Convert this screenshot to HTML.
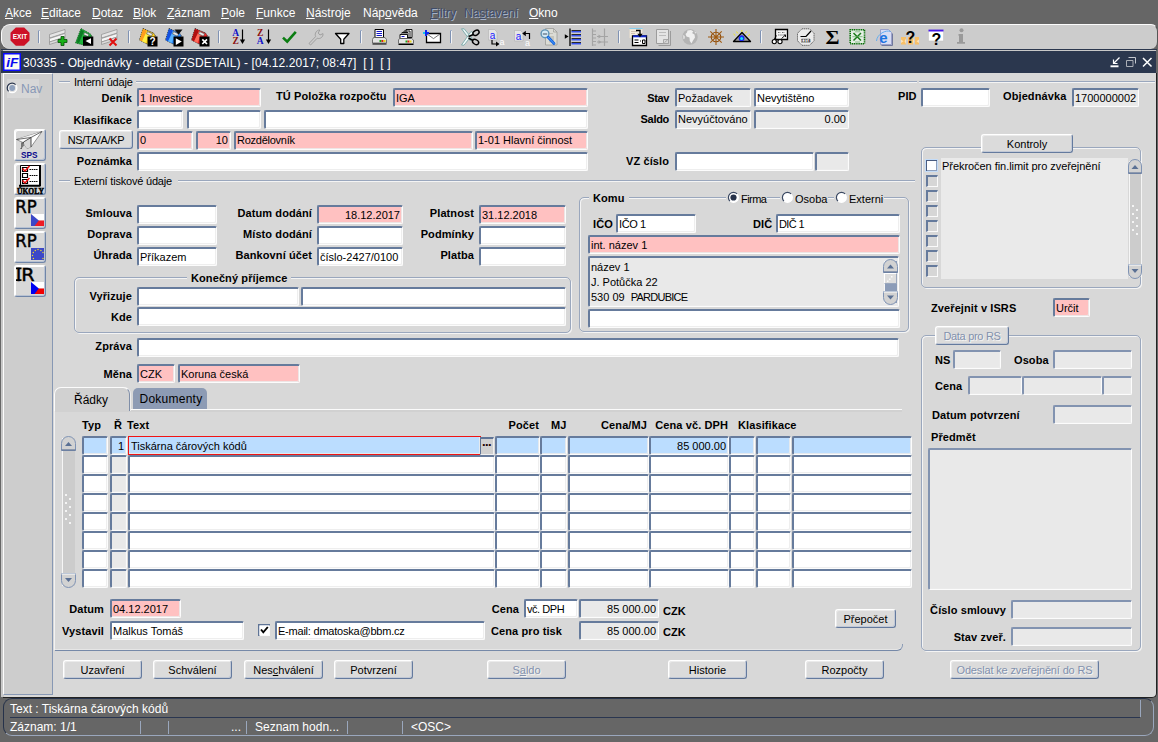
<!DOCTYPE html><html lang="cs"><head><meta charset="utf-8"><title>30335 - Objednávky - detail</title><style>
*{box-sizing:border-box;margin:0;padding:0}
html,body{width:1158px;height:742px;overflow:hidden;background:#666666;font-family:"Liberation Sans",sans-serif;font-size:11px;color:#000}
.abs,.f,.l,.b,.ln,.fr{position:absolute}
.f{height:19px;border:solid;border-width:2px 1px 1px 2px;border-color:#667b9c #fcfcfc #fcfcfc #667b9c;border-radius:2px;background:#fff;font-size:11px;line-height:17px;padding:0 2px 1px 1px;white-space:nowrap;overflow:hidden;box-shadow:inset -1px -1px 0 rgba(235,235,235,0.85)}
.p{background:#ffc1c1}
.g{background:#e9e9e9}
.d{border-color:#8293b0 #fcfcfc #fcfcfc #8293b0}
.s{background:#bbddff}
.r{text-align:right}
.l{font-weight:bold;font-size:11px;line-height:14px;white-space:nowrap;letter-spacing:0.1px}
.n{letter-spacing:-0.2px}
.lr{text-align:right}
.n{font-weight:normal}
.b{height:19px;border:1px solid;border-color:#fff #647a9e #647a9e #fff;border-radius:3px;background:#dbdbdb;font-size:11px;line-height:18px;text-align:center;white-space:nowrap;box-shadow:inset 1px 1px 0 #ebebeb,inset -1px -1px 0 #c2c9d6}
.dis{color:#8291ad;text-shadow:1px 1px 0 #f4f4f4}
.fr{border:1px solid #9aa7bd;border-radius:5px;box-shadow:1px 1px 0 #f4f4f4, inset 1px 1px 0 #f4f4f4}
.hl{height:2px;border-top:1px solid #9aa7bd;border-bottom:1px solid #f4f4f4}
.m{position:absolute;top:6px;color:#fff;font-size:12px;line-height:14px;white-space:nowrap}
.m u{text-decoration:underline}
.md{color:#3f4c68;text-shadow:1px 1px 0 #a6b1c6}
</style></head><body>
<div class="m " style="left:5px"><u>A</u>kce</div>
<div class="m " style="left:41px"><u>E</u>ditace</div>
<div class="m " style="left:92px"><u>D</u>otaz</div>
<div class="m " style="left:133px"><u>B</u>lok</div>
<div class="m " style="left:167px"><u>Z</u>áznam</div>
<div class="m " style="left:221px"><u>P</u>ole</div>
<div class="m " style="left:256px"><u>F</u>unkce</div>
<div class="m " style="left:306px"><u>N</u>ástroje</div>
<div class="m " style="left:363px">Náp<u>o</u>věda</div>
<div class="m md" style="left:430px"><u>F</u>iltry</div>
<div class="m md" style="left:464px">Na<u>s</u>tavení</div>
<div class="m " style="left:529px"><u>O</u>kno</div>
<div class="abs" style="left:1px;top:49px;width:1156px;height:1px;background:#2b374e"></div><div class="abs" style="left:3px;top:50px;width:1153px;height:1px;background:#c8c8c8"></div>
<div class="abs" style="left:1px;top:24px;width:1157px;height:25px;background:#cccccc;border-radius:9px 7px 7px 9px;border-top:1px solid #fcfcfc;border-left:1px solid #fcfcfc;border-right:1px solid #555"></div>
<svg class="abs" style="left:0;top:24px" width="1158" height="28" viewBox="0 24 1158 28"><path d="M15.8 27.5h8.4l5.3 5.3v7.6l-5.3 5.3h-8.4l-5.3-5.3v-7.6z" fill="#cd1126"/><text x="20" y="39.3" font-size="7" font-weight="bold" fill="#fff" text-anchor="middle" font-family="Liberation Sans,sans-serif" textLength="14.5" lengthAdjust="spacingAndGlyphs">EXIT</text><path d="M38.5 30.5V43" stroke="#7f92b3" stroke-width="1" fill="none"/><path d="M39.5 30V43.5" stroke="#f4f4f4" stroke-width="1" fill="none"/><path d="M38 30.5h2" stroke="#a6b3c9" fill="none"/><g transform="translate(49,29)" stroke="#8c8c8c" stroke-width="0.7"><path d="M0.5 5.5 L16 0.5 V4 L0.5 9 Z" fill="#e6e6e6"/><path d="M0.5 9.5 L16 4.5 V8 L0.5 13 Z" fill="#f6f6f6"/><path d="M0.5 13 L16 8 V10.5 L0.5 15.5 Z" fill="#dcdcdc"/></g><path d="M61 36.5h3v3h3v3h-3v3h-3v-3h-3v-3h3z" fill="#18b018" stroke="#064d06" stroke-width="0.8"/><g transform="translate(75,28)"><path d="M6 0.5 L15.5 6 L17 9 L9 17 L0.5 15 Z" fill="#1eb43c" stroke="#0a4a12" stroke-width="0.8" stroke-dasharray="1.2 0.8"/><path d="M6 1.5 L9 3.2 L4 15 L1.5 14.5 Z" fill="#0d7a24"/><path d="M9.6 4.4 L14 6.6 L13 8.6 L8.6 6.6 Z" fill="#e8e8e8" stroke="#444" stroke-width="0.6"/><rect x="8" y="8.5" width="10.3" height="9.3" fill="#000"/><path d="M16 10.3 V16 L10.5 13.1 Z" fill="#fff"/></g><g transform="translate(101,29)" stroke="#8c8c8c" stroke-width="0.7"><path d="M0.5 5.5 L16 0.5 V4 L0.5 9 Z" fill="#e6e6e6"/><path d="M0.5 9.5 L16 4.5 V8 L0.5 13 Z" fill="#f6f6f6"/><path d="M0.5 13 L16 8 V10.5 L0.5 15.5 Z" fill="#dcdcdc"/></g><path d="M109.5 38.5 L116.5 45.5 M116.5 38.5 L109.5 45.5" stroke="#e01010" stroke-width="2" fill="none"/><path d="M128.5 30.5V43" stroke="#7f92b3" stroke-width="1" fill="none"/><path d="M129.5 30V43.5" stroke="#f4f4f4" stroke-width="1" fill="none"/><path d="M128 30.5h2" stroke="#a6b3c9" fill="none"/><g transform="translate(139,28)"><path d="M4 0.5 L14.5 5 L16.5 8 L10 17 L0.5 12 Z" fill="#ffd21e" stroke="#222" stroke-width="0.8" stroke-dasharray="1.2 0.8"/><path d="M4 1 L8 2.8 L3 13.2 L0.8 12 Z" fill="#ff9d1e"/><path d="M8 3 L11 4.3 L6.5 15 L3.2 13.3 Z" fill="#ffee44"/><path d="M8.5 3.6 L13.6 5.8 L12.4 8.2 L7.6 6 Z" fill="#e8e8e8" stroke="#444" stroke-width="0.6"/><rect x="8.5" y="8.5" width="10" height="10" fill="#000"/></g><text x="152.6" y="45.3" font-size="10" font-weight="bold" fill="#fff" text-anchor="middle" font-family="Liberation Sans,sans-serif">?</text><g transform="translate(165,28)"><path d="M4 0.5 L14.5 5 L16.5 8 L10 17 L0.5 12 Z" fill="#2a8cff" stroke="#222" stroke-width="0.8" stroke-dasharray="1.2 0.8"/><path d="M4 1 L8 2.8 L3 13.2 L0.8 12 Z" fill="#1450e0"/><path d="M8 3 L11 4.3 L6.5 15 L3.2 13.3 Z" fill="#58b4ff"/><path d="M8.5 3.6 L13.6 5.8 L12.4 8.2 L7.6 6 Z" fill="#e8e8e8" stroke="#444" stroke-width="0.6"/><rect x="8.5" y="8.5" width="10" height="10" fill="#000"/></g><path d="M175.8 38.2 V45 L181.8 41.6 Z" fill="#fff"/><path d="M174.5 29.5h8l-4 5z" fill="#111"/><g transform="translate(191,28)"><path d="M4 0.5 L14.5 5 L16.5 8 L10 17 L0.5 12 Z" fill="#f02828" stroke="#222" stroke-width="0.8" stroke-dasharray="1.2 0.8"/><path d="M4 1 L8 2.8 L3 13.2 L0.8 12 Z" fill="#b01010"/><path d="M8 3 L11 4.3 L6.5 15 L3.2 13.3 Z" fill="#ff6a5a"/><path d="M8.5 3.6 L13.6 5.8 L12.4 8.2 L7.6 6 Z" fill="#e8e8e8" stroke="#444" stroke-width="0.6"/><rect x="8.5" y="8.5" width="10" height="10" fill="#000"/></g><path d="M202.3 39.3 L207 44 M207 39.3 L202.3 44" stroke="#fff" stroke-width="1.7" fill="none"/><path d="M218.5 30.5V43" stroke="#7f92b3" stroke-width="1" fill="none"/><path d="M219.5 30V43.5" stroke="#f4f4f4" stroke-width="1" fill="none"/><path d="M218 30.5h2" stroke="#a6b3c9" fill="none"/><text x="235.6" y="35.6" font-size="9.5" font-weight="bold" fill="#1010c8" text-anchor="middle" font-family="Liberation Serif,serif">A</text><text x="235.6" y="43.6" font-size="9.5" font-weight="bold" fill="#8c1010" text-anchor="middle" font-family="Liberation Serif,serif">Z</text><path d="M242.5 29.5V41" stroke="#000" stroke-width="1.2" fill="none"/><path d="M239.9 39.5h5.2l-2.6 4.6z" fill="#000"/><text x="260.2" y="35.6" font-size="9.5" font-weight="bold" fill="#8c1010" text-anchor="middle" font-family="Liberation Serif,serif">Z</text><text x="260.2" y="43.6" font-size="9.5" font-weight="bold" fill="#1010c8" text-anchor="middle" font-family="Liberation Serif,serif">A</text><path d="M268.5 29.5V41" stroke="#000" stroke-width="1.2" fill="none"/><path d="M265.9 39.5h5.2l-2.6 4.6z" fill="#000"/><path d="M283 37.6 L287.2 41.6 L295.8 31.8" stroke="#0b7d12" stroke-width="2.6" fill="none"/><path d="M309 43.5 L315.6 36.6 C314.4 33.4 316.4 30 319.8 30 L318.2 33 L320 35 L323 33.6 C323.4 37 320 39.4 317.2 38.2 L310.6 45 Z" fill="none" stroke="#9a9a9a" stroke-width="0.9"/><path d="M335.5 33.5 H349 L343.8 39.2 V43.5 H340.7 V39.2 Z" fill="#fff" stroke="#000" stroke-width="1.3" stroke-linejoin="round"/><path d="M360.5 30.5V43" stroke="#7f92b3" stroke-width="1" fill="none"/><path d="M361.5 30V43.5" stroke="#f4f4f4" stroke-width="1" fill="none"/><path d="M360 30.5h2" stroke="#a6b3c9" fill="none"/><g transform="translate(372,29)"><path d="M3 0.5 H11.5 V8.5 H3 Z" fill="#fff" stroke="#000" stroke-width="1"/><path d="M4.5 2.5H10 M4.5 4.5H10 M4.5 6.5H10" stroke="#1414c8" stroke-width="1"/><path d="M1.5 8.5 H13 L14.5 10.5 V14 H0.5 V10.5 Z" fill="#e4e4e4" stroke="#555" stroke-width="0.8"/><rect x="7.5" y="11" width="2" height="2" fill="#18a818"/><rect x="9.5" y="11" width="2" height="2" fill="#e01818"/><rect x="11.5" y="11" width="2" height="2" fill="#e8d818"/><path d="M0.5 14.5 H14.5 V15.5 H0.5Z" fill="#000"/></g><g transform="translate(398,28)"><path d="M8 1.5h6v8h-6z M6 3h6v8h-6z M4 4.5h6v8h-6z" fill="#fff" stroke="#000" stroke-width="0.9"/><path d="M2 6.5h7.5v4H2z" fill="#fff" stroke="#000" stroke-width="0.9"/><path d="M3.5 8.5h3" stroke="#1414c8"/><path d="M1.5 10.5 H13.5 L15.5 12 V15.5 H0.5 V12 Z" fill="#e4e4e4" stroke="#555" stroke-width="0.8"/><rect x="7.5" y="12.5" width="2" height="2" fill="#18a818"/><rect x="9.5" y="12.5" width="2" height="2" fill="#e01818"/><rect x="11.5" y="12.5" width="2" height="2" fill="#e8d818"/><path d="M0.5 16 H15.5 V17 H0.5Z" fill="#000"/></g><path d="M426.5 33.5 H440.5 V42.5 H426.5 Z" fill="#fff" stroke="#000" stroke-width="1.3"/><path d="M427 34 L433.5 38.6 L440 34" fill="none" stroke="#555" stroke-width="0.8"/><path d="M425 30h2v2h2v2h-2v2h-2v-2h-2v-2h2z" fill="#0a28f0"/><path d="M423 32h2v2h-2z" fill="#18c8f0"/><path d="M450.5 30.5V43" stroke="#7f92b3" stroke-width="1" fill="none"/><path d="M451.5 30V43.5" stroke="#f4f4f4" stroke-width="1" fill="none"/><path d="M450 30.5h2" stroke="#a6b3c9" fill="none"/><path d="M461.5 28.800 L464.200 28.800 L472.500 39 L470.500 41 Z" fill="#e8f4f4" stroke="#5f9a9a" stroke-width="0.700"/><path d="M461.500 45 L464 45.200 L473.500 33 L471 31.500 Z" fill="#f4fbfb" stroke="#5f9a9a" stroke-width="0.700"/><ellipse cx="476" cy="32.800" rx="3.300" ry="2.300" fill="none" stroke="#000" stroke-width="1.400" transform="rotate(-30 476 32.800)"/><ellipse cx="475.600" cy="42" rx="3.300" ry="2.300" fill="none" stroke="#000" stroke-width="1.400" transform="rotate(30 475.600 42)"/><path d="M468.500 36.500 L473.500 34.500 M468.500 38 L473 40.500" stroke="#000" stroke-width="1.500"/><path d="M488.5 29.5h6l2.500 2.5v8h-8.5z" fill="#e6e6e6" stroke="#b0b0b0" stroke-width="0.6"/><text x="492.6" y="38.6" font-size="10" fill="#1a1aff" text-anchor="middle" font-family="Liberation Sans,sans-serif">a</text><path d="M492 40 V44 H496.5" stroke="#000" stroke-width="1.2" fill="none"/><path d="M496 41.5 L499.5 44 L496 46.5 Z" fill="#000"/><text x="502" y="45" font-size="9" fill="#fff" text-anchor="middle" font-family="Liberation Sans,sans-serif">a</text><path d="M514.5 30.500h6l2.500 2.500v8h-8.5z" fill="#e6e6e6" stroke="#b0b0b0" stroke-width="0.6"/><text x="518.6" y="39.600" font-size="10" fill="#1a1aff" text-anchor="middle" font-family="Liberation Sans,sans-serif">a</text><path d="M529.5 39 V33.500 H525" stroke="#000" stroke-width="1.2" fill="none"/><path d="M525.8 30.800 L522.200 33.500 L525.800 36.200 Z" fill="#000"/><text x="527.500" y="45.600" font-size="9" fill="#fff" text-anchor="middle" font-family="Liberation Sans,sans-serif">a</text><path d="M545.5 28.500h8l3.500 3.500v13h-11.500z" fill="#dcdcd6" stroke="#9c9c98" stroke-width="0.800"/><path d="M553.500 28.500v3.500h3.500" fill="none" stroke="#9c9c98" stroke-width="0.700"/><path d="M549 36h5v6.500h-5z" fill="#c4c4bc"/><path d="M547 33.500h6" stroke="#b8b8b0" stroke-width="0.800"/><circle cx="545" cy="33.800" r="3.900" fill="#d4eaf6" stroke="#5f93b4" stroke-width="1.400"/><path d="M542.800 33.300h4.400v1.400h-4.400z" fill="#6a7a8c"/><path d="M548.200 37.300 L554 43.500" stroke="#1464e0" stroke-width="2.800" stroke-linecap="round"/><path d="M548.200 37.300 L554 43.500" stroke="#5aa8ff" stroke-width="0.900" stroke-linecap="round"/><path d="M564.8 34.200 L568.600 36.500 L564.800 38.800 Z" fill="#000"/><path d="M570 28.500 V46" stroke="#000" stroke-width="1.300"/><path d="M571.5 30.2h9.500v1h-9.500z" fill="#000"/><path d="M571.5 31.2h9.500v1.200h-9.500z" fill="#1a3cff"/><path d="M571.5 34.2h9.500v1h-9.500z" fill="#000"/><path d="M571.5 35.2h9.500v1.200h-9.500z" fill="#1a3cff"/><path d="M571.5 38.2h9.500v1h-9.500z" fill="#000"/><path d="M571.5 39.2h9.500v1.200h-9.500z" fill="#1a3cff"/><path d="M571.5 42.2h9.500v1h-9.500z" fill="#000"/><path d="M571.5 43.2h9.500v1.200h-9.500z" fill="#1a3cff"/><path d="M592.5 28.500V46 M604.500 28.500V46 M593 31h3 M593 34.500h3 M593 38h3 M593 41.500h3 M593 45h3" stroke="#a4a4a4" stroke-width="1.200" fill="none"/><path d="M597 36.500h11 M597 42h11" stroke="#a4a4a4" stroke-width="1.200"/><path d="M598.500 34.500l3 2-3 2z M598.500 40l3 2-3 2z" fill="#a4a4a4"/><path d="M618.5 30.5V43" stroke="#7f92b3" stroke-width="1" fill="none"/><path d="M619.5 30V43.5" stroke="#f4f4f4" stroke-width="1" fill="none"/><path d="M618 30.5h2" stroke="#a6b3c9" fill="none"/><path d="M629.5 29h13v9h-13z" fill="#f4ece0" stroke="#d8d0c4" stroke-width="0.5"/><path d="M629.5 28.500h13" stroke="#88d0f0" stroke-width="1"/><path d="M631 31.500h6 M631 33.500h4" stroke="#c8b8a8" stroke-width="0.8"/><path d="M632.5 36h14v9.500h-14z" fill="#fff" stroke="#000" stroke-width="1.300"/><path d="M633 35.300h13.500v2h-13.500z" fill="#1428c8"/><path d="M636 30.500h4v4" stroke="#000" stroke-width="1.300" fill="none"/><path d="M637.300 33.800h5.400l-2.700 3.400z" fill="#000"/><path d="M634.5 40h4 M634.500 42.500h4 M640.500 40.500v1 M642.500 40h2.500v3.500h-2.500z" stroke="#000" stroke-width="1" fill="none"/><path d="M656.500 29.500h12v14h-12z" fill="#e4e4e4" stroke="#9c9c9c" stroke-width="1"/><path d="M670.500 31v14.500h-12" fill="none" stroke="#9c9c9c" stroke-width="1"/><path d="M659 32.500h7 M659 35.500h7" stroke="#bcbcbc"/><path d="M663.500 39.500h5v4h-5z" fill="#d8d8d8" stroke="#9c9c9c" stroke-width="0.800"/><path d="M664.500 42.500l3-2.500" stroke="#9c9c9c" stroke-width="0.800"/><circle cx="690" cy="37" r="7.700" fill="#b4b4b4"/><path d="M687.500 30.500 L691 30 L693.500 31.500 L692 33 L694.500 34.500 L695 37.500 L693 40.500 L691.500 43.500 L689.800 41 L689.500 37.500 L686.500 36.500 L685.500 34 L687 32.500 Z" fill="#f0f0f0"/><path d="M683.200 35l1.500 1v2.500l-1.300 .8z M694.500 31l2 2-1.500 .5z" fill="#e8e8e8"/><circle cx="716" cy="37" r="4.800" fill="none" stroke="#8c4a0a" stroke-width="1.100"/><circle cx="716" cy="37" r="1.300" fill="#8c4a0a"/><path d="M708 37h16 M716 29v16 M710.300 31.300l11.400 11.400 M721.700 31.300l-11.400 11.400" stroke="#a05a10" stroke-width="1.100"/><path d="M733.500 41.500 L742 32.500 L750.500 41.500 Z" fill="#9c9c9c" stroke="#000" stroke-width="1.300" stroke-linejoin="round"/><circle cx="741.600" cy="38.200" r="2.900" fill="#1a28f0"/><circle cx="741.600" cy="38.600" r="1.500" fill="#18e0f8"/><path d="M733.500 34l1.800 1.500 M736.500 31.500l1.200 1.800 M741.800 30v1.800 M746.500 31.500l-1.200 1.800 M750 34.500l-1.800 1.300" stroke="#f4e818" stroke-width="1"/><path d="M760.5 30.5V43" stroke="#7f92b3" stroke-width="1" fill="none"/><path d="M761.5 30V43.5" stroke="#f4f4f4" stroke-width="1" fill="none"/><path d="M760 30.5h2" stroke="#a6b3c9" fill="none"/><path d="M775.500 29.500h12v10h-12z" fill="#f4f4f4" stroke="#000" stroke-width="1.300"/><path d="M778 32.500h2.500 M782 32.500h2.500 M778 35h5" stroke="#555" stroke-width="0.800" stroke-dasharray="1.500 0.700"/><path d="M781.500 38.500l4-3.500m0 0h-2m2 0v2" stroke="#000" stroke-width="0.900" fill="none"/><circle cx="774.300" cy="41.600" r="2.100" fill="#fff" stroke="#000" stroke-width="1.100"/><circle cx="780" cy="41.600" r="2.100" fill="#fff" stroke="#000" stroke-width="1.100"/><path d="M774 39.500l2.500-4" stroke="#000" stroke-width="0.900"/><path d="M802 28.800h7.500l4.500 4.500v7.500l-4.500 4.500h-7.500l-4.500-4.500v-7.500z" fill="#ececec" stroke="#555" stroke-width="0.900" stroke-dasharray="1.300 0.600"/><path d="M800.500 36.500h5.500l5-5.500" stroke="#000" stroke-width="1.200" fill="none"/><path d="M801.500 39h8.500v3.500h-8.500z" fill="#fff" stroke="#666" stroke-width="0.500"/><text x="805.800" y="42.300" font-size="4" font-weight="bold" fill="#222" text-anchor="middle" font-family="Liberation Sans,sans-serif">1314</text><text x="832.500" y="44" font-size="18" font-weight="bold" fill="#000" text-anchor="middle" font-family="Liberation Serif,serif" textLength="14" lengthAdjust="spacingAndGlyphs">Σ</text><path d="M850.200 29.700h14.300v14h-14.300z" fill="#e4f0e4" stroke="#0a700a" stroke-width="1.600" stroke-dasharray="1.200 0.600"/><path d="M853.500 33l7.500 7.500 M861 33l-7.500 7.500" stroke="#1a7c1a" stroke-width="1.500"/><path d="M855 31.800h5 M855 42h5" stroke="#6aa86a" stroke-width="0.700"/><path d="M852.500 36.700h10" stroke="#5aa85a" stroke-width="0.700"/><path d="M880.500 29.500h8l3 3v12h-11z" fill="#d8dcf4" stroke="#8c94c4" stroke-width="0.800"/><path d="M881.500 45.500h11v-12" fill="none" stroke="#70789c" stroke-width="1"/><text x="883.300" y="43.200" font-size="15" font-weight="bold" fill="#1e74e0" text-anchor="middle" font-family="Liberation Sans,sans-serif">e</text><path d="M876.500 41 C 877 34, 886 29.500, 890.500 31.500" fill="none" stroke="#58a8f0" stroke-width="0.900"/><path d="M901 37h5v7.500h-5z M908 37h5v7.500h-5z M915 37h4v7.500h-4z" fill="#f8c068"/><path d="M901 39.500l2.500 1.800-2.500 1.800z M919 39.500l-2.500 1.800 2.500 1.800z M906 38.500l-1.500 2.800 1.500 2.800z M913 38.500l1.500 2.800-1.500 2.800z" fill="#fce4bc"/><text x="910.500" y="42.500" font-size="16" font-weight="bold" fill="#000" text-anchor="middle" font-family="Liberation Sans,sans-serif">?</text><path d="M928.500 30h15v11h-15z" fill="#fff" stroke="#c4c4c4" stroke-width="0.600"/><path d="M928.500 29.600h15v1.900h-15z" fill="#4818e8"/><text x="936.300" y="45.200" font-size="16" font-weight="bold" fill="#000" text-anchor="middle" font-family="Liberation Sans,sans-serif">?</text><circle cx="961.500" cy="30.300" r="2" fill="#9a9a9a"/><path d="M958.500 34h4.500v8h2v1.800h-8v-1.800h2v-6.200h-.5z" fill="#9a9a9a"/></svg>
<div class="abs" style="left:1px;top:51px;width:1155px;height:22px;background:#2b374e"></div>
<svg class="abs" style="left:3px;top:53px" width="18" height="18" viewBox="0 0 18 18"><rect x="0.75" y="0.75" width="16.5" height="16.5" fill="#fcfcf4" stroke="#0a0aff" stroke-width="1.500"/><text x="9.300" y="13.600" font-size="13" font-weight="bold" font-style="italic" fill="#0a0af0" text-anchor="middle" font-family="Liberation Sans,sans-serif" textLength="12" lengthAdjust="spacingAndGlyphs">iF</text></svg>
<div class="abs" style="left:23px;top:56px;color:#fff;font-size:12px;line-height:14px;white-space:nowrap;letter-spacing:0.08px">30335 - Objednávky - detail (ZSDETAIL) - [04.12.2017; 08:47]&nbsp; [ ]&nbsp; [ ]</div>
<svg class="abs" style="left:1105px;top:54px" width="50" height="16" viewBox="1105 54 50 16" fill="none" stroke="#fff"><path d="M1110.500 66.300h8" stroke-width="1.900"/><path d="M1119.500 57.500 L1114 63" stroke-width="1.200"/><path d="M1113.500 59.500v4h4" stroke-width="1.200"/><path d="M1128.500 57.500h7v6" stroke="#c4c8d0" stroke-width="1"/><path d="M1126.500 60.500h6.500v6h-6.500z" stroke="#aaaeb6" stroke-width="1"/><path d="M1143 58 L1151.500 66.500 M1151.500 58 L1143 66.500" stroke-width="1.500"/></svg>
<div class="abs" style="left:3px;top:73px;width:1154px;height:625px;background:#d8d8d8;border-radius:0 0 5px 0;border-right:1px solid #222;border-bottom:1px solid #222"></div>
<div class="abs" style="left:1px;top:73px;width:3px;height:624px;background:#c8c8c8"></div>
<div class="abs" style="left:3px;top:73px;width:50px;height:622px;background:#cdcdcd;border-right:1px solid #8798b4;border-top:1px solid #fcfcfc;border-left:1px solid #fcfcfc;border-bottom:1px solid #8798b4"></div>
<div class="abs" style="left:7px;top:79px;width:32px;height:19px;background:#d7d7d7"></div>
<svg class="abs" style="left:6px;top:82px" width="13" height="13" viewBox="0 0 13 13"><circle cx="6.2" cy="6" r="4.700" fill="#e4e4e4" stroke="#fff" stroke-width="1.200"/><path d="M2.6 9.400 A4.800 4.800 0 0 1 9.600 2.600" fill="none" stroke="#26324a" stroke-width="1.200"/><circle cx="6.200" cy="6" r="2.900" fill="#8fa1bd"/></svg>
<div class="abs" style="left:21px;top:82px;color:#8797b6;font-size:12px;line-height:14px">Nav</div>
<div class="abs" style="left:14px;top:129px;width:32px;height:32px;background:#d8d8d8;border:1px solid;border-color:#fff #6f85a8 #6f85a8 #fff;border-radius:3px;box-shadow:inset 1px 1px 0 #fff, inset -1px -1px 0 #b8c2d2"></div>
<svg class="abs" style="left:14px;top:129px" width="32" height="32" viewBox="0 0 32 32"><path d="M2.500 10.500 L28 2.500 L17 18 L13 19.500 L9 13.500 Z" fill="#fff" stroke="#555" stroke-width="0.600"/><path d="M2.500 10.500 L17 8.500 L28 2.500" fill="#f4f4f4" stroke="#333" stroke-width="0.700"/><path d="M17 8.500 L17 18 L13 19.500 L9 13.500 Z" fill="#d8d8d8"/><path d="M17 8.500 L9.500 13 L7 20 L9 13.500" fill="#444" stroke="#222" stroke-width="0.700"/><path d="M7 13 L7 20 L10.500 16" fill="#777"/><path d="M17 8.500 V18" stroke="#222" stroke-width="0.800"/><text x="15.200" y="28.700" font-size="8.600" font-weight="bold" fill="#0a0a8c" text-anchor="middle" font-family="Liberation Sans,sans-serif" textLength="16.500" lengthAdjust="spacingAndGlyphs">SPS</text></svg>
<div class="abs" style="left:14px;top:163px;width:32px;height:32px;background:#d8d8d8;border:1px solid;border-color:#fff #6f85a8 #6f85a8 #fff;border-radius:3px;box-shadow:inset 1px 1px 0 #fff, inset -1px -1px 0 #b8c2d2"></div>
<svg class="abs" style="left:14px;top:163px" width="32" height="32" viewBox="0 0 32 32"><path d="M6.500 2.500h19v20h-19z" fill="#fff" stroke="#000" stroke-width="1"/><path d="M26 2v21 M5 22.800h21.500" stroke="#000" stroke-width="2"/><path d="M8.500 4.500h5v4h-5z M8.500 10.500h5v4h-5z M8.500 16.500h5v4h-5z" fill="#fff" stroke="#000" stroke-width="1.200"/><path d="M15.500 6.500h8 M15.500 12.500h8 M15.500 18.500h8" stroke="#000" stroke-width="1" stroke-dasharray="1.600 0.600"/><path d="M8.500 5.500 L11 8 L15.500 3 M8.500 17.500 L11 20 L15.500 15" fill="none" stroke="#f01010" stroke-width="1.500"/><text x="16.500" y="31" font-size="8" font-weight="bold" fill="#000" text-anchor="middle" font-family="Liberation Serif,serif" textLength="27" lengthAdjust="spacingAndGlyphs" stroke="#000" stroke-width="0.500">ÚKOLY</text></svg>
<div class="abs" style="left:14px;top:197px;width:32px;height:32px;background:#d8d8d8;border:1px solid;border-color:#fff #6f85a8 #6f85a8 #fff;border-radius:3px;box-shadow:inset 1px 1px 0 #fff, inset -1px -1px 0 #b8c2d2"></div>
<svg class="abs" style="left:14px;top:197px" width="32" height="32" viewBox="0 0 32 32"><text x="12" y="16" font-size="18.500" fill="#000" stroke="#000" stroke-width="0.450" text-anchor="middle" font-family="DejaVu Sans,Liberation Sans,sans-serif" textLength="21.500" lengthAdjust="spacingAndGlyphs">RP</text><path d="M17 17h13v6.500h-13z" fill="#fff"/><path d="M17 23.500h13v5.500h-13z" fill="#ee1c25"/><path d="M17 17 L24.800 23.500 L20.500 29 H17 Z" fill="#3c48c8"/></svg>
<div class="abs" style="left:14px;top:231px;width:32px;height:32px;background:#d8d8d8;border:1px solid;border-color:#fff #6f85a8 #6f85a8 #fff;border-radius:3px;box-shadow:inset 1px 1px 0 #fff, inset -1px -1px 0 #b8c2d2"></div>
<svg class="abs" style="left:14px;top:231px" width="32" height="32" viewBox="0 0 32 32"><text x="12" y="16" font-size="18.500" fill="#000" stroke="#000" stroke-width="0.450" text-anchor="middle" font-family="DejaVu Sans,Liberation Sans,sans-serif" textLength="21.500" lengthAdjust="spacingAndGlyphs">RP</text><path d="M17 17h13v12h-13z" fill="#3c48c8"/><g fill="#f4e020"><circle cx="24" cy="18.500" r="0.700"/><circle cx="21.300" cy="19.500" r="0.700"/><circle cx="26.900" cy="19.500" r="0.700"/><circle cx="19.300" cy="21.500" r="0.700"/><circle cx="29" cy="21.500" r="0.700"/><circle cx="18.500" cy="24.500" r="0.700"/><circle cx="19.400" cy="27.500" r="0.700"/><circle cx="29" cy="27.500" r="0.700"/></g></svg>
<div class="abs" style="left:14px;top:265px;width:32px;height:32px;background:#d8d8d8;border:1px solid;border-color:#fff #6f85a8 #6f85a8 #fff;border-radius:3px;box-shadow:inset 1px 1px 0 #fff, inset -1px -1px 0 #b8c2d2"></div>
<svg class="abs" style="left:14px;top:265px" width="32" height="32" viewBox="0 0 32 32"><text x="11.200" y="16" font-size="18.500" fill="#000" stroke="#000" stroke-width="0.450" text-anchor="middle" font-family="DejaVu Sans,Liberation Sans,sans-serif" textLength="19" lengthAdjust="spacingAndGlyphs">IR</text><path d="M2 3.300h5.500 M2 15.200h5.500" stroke="#000" stroke-width="1.700"/><path d="M17 17h13v6.500h-13z" fill="#fff"/><path d="M17 23.500h13v5.500h-13z" fill="#f00000"/><path d="M17 17 L24.800 23.500 L20.500 29 H17 Z" fill="#0000f0"/></svg>
<div class="abs" style="left:3px;top:698px;width:1151px;height:38px;border:1px solid;border-color:#26324a #9aa7bd #9aa7bd #26324a;border-radius:9px"></div>
<div class="abs" style="left:10px;top:717px;width:1130px;height:1px;background:#2a3650"></div>
<div class="abs" style="left:1140px;top:700px;width:1px;height:17px;background:#9aa7bd"></div>
<div class="abs" style="left:10px;top:702px;color:#fff;font-size:12px;line-height:14px;white-space:nowrap">Text : Tiskárna čárových kódů</div>
<div class="abs" style="left:10px;top:720px;color:#fff;font-size:12px;line-height:14px;white-space:nowrap">Záznam: 1/1</div>
<div class="abs" style="left:231px;top:720px;color:#fff;font-size:12px;line-height:14px">...</div>
<div class="abs" style="left:255px;top:720px;color:#fff;font-size:12px;line-height:14px;white-space:nowrap">Seznam hodn...</div>
<div class="abs" style="left:411px;top:720px;color:#fff;font-size:12px;line-height:14px">&lt;OSC&gt;</div>
<div class="abs" style="left:140px;top:721px;width:1px;height:13px;background:#9aa7bd"></div>
<div class="abs" style="left:168px;top:721px;width:1px;height:13px;background:#9aa7bd"></div>
<div class="abs" style="left:246px;top:721px;width:1px;height:13px;background:#9aa7bd"></div>
<div class="abs" style="left:347px;top:721px;width:1px;height:13px;background:#9aa7bd"></div>
<div class="abs" style="left:402px;top:721px;width:1px;height:13px;background:#9aa7bd"></div>
<div class="abs hl" style="left:59px;top:81px;width:11px"></div>
<div class="abs hl" style="left:136px;top:81px;width:781px"></div>
<div class="abs hl" style="left:919px;top:81px;width:236px"></div>
<div class="l n" style="left:74px;top:75px">Interní údaje</div>
<div class="l lr " style="right:1026px;top:91px">Deník</div>
<div class="f p" style="left:137px;top:88px;width:124px;height:19px;">1 Investice</div>
<div class="l " style="left:276px;top:89px">TÚ Položka rozpočtu</div>
<div class="f p" style="left:393px;top:88px;width:195px;height:19px;">IGA</div>
<div class="l lr " style="right:489px;top:91px"><span style="letter-spacing:-0.4px">Stav</span></div>
<div class="f g" style="left:675px;top:88px;width:76px;height:19px;">Požadavek</div>
<div class="f " style="left:754px;top:88px;width:95px;height:19px;">Nevytištěno</div>
<div class="l " style="left:898px;top:89px">PID</div>
<div class="f " style="left:921px;top:88px;width:69px;height:19px;"></div>
<div class="l " style="left:1003px;top:89px">Objednávka</div>
<div class="f g" style="left:1072px;top:88px;width:67px;height:19px;">1700000002</div>
<div class="l lr " style="right:1026px;top:113px">Klasifikace</div>
<div class="f " style="left:137px;top:110px;width:46px;height:19px;"></div>
<div class="f " style="left:187px;top:110px;width:74px;height:19px;"></div>
<div class="f " style="left:264px;top:110px;width:324px;height:19px;"></div>
<div class="l lr " style="right:489px;top:112px"><span style="letter-spacing:-0.3px">Saldo</span></div>
<div class="f g" style="left:675px;top:110px;width:76px;height:19px;line-height:15px;">Nevyúčtováno</div>
<div class="f g r" style="left:754px;top:110px;width:95px;height:19px;line-height:15px;">0.00</div>
<div class="b " style="left:59px;top:130px;width:74px;height:19px"><span style="letter-spacing:-0.3px">NS/TA/A/KP</span></div>
<div class="f p" style="left:137px;top:131px;width:56px;height:19px;line-height:15px;">0</div>
<div class="f p r" style="left:196px;top:131px;width:35px;height:19px;line-height:15px;">10</div>
<div class="f p" style="left:234px;top:131px;width:239px;height:19px;line-height:15px;"><span style="letter-spacing:-0.25px">Rozdělovník</span></div>
<div class="f p" style="left:475px;top:131px;width:113px;height:19px;line-height:15px;">1-01 Hlavní činnost</div>
<div class="l lr " style="right:1026px;top:154px">Poznámka</div>
<div class="f " style="left:137px;top:152px;width:451px;height:19px;"></div>
<div class="l lr " style="right:489px;top:154px">VZ číslo</div>
<div class="f " style="left:675px;top:152px;width:139px;height:19px;"></div>
<div class="f g" style="left:815px;top:152px;width:34px;height:19px;"></div>
<div class="abs hl" style="left:59px;top:180px;width:11px"></div>
<div class="abs hl" style="left:178px;top:180px;width:737px"></div>
<div class="l n" style="left:74px;top:174px">Externí tiskové údaje</div>
<div class="l lr " style="right:1026px;top:206px">Smlouva</div>
<div class="f " style="left:137px;top:205px;width:80px;height:19px;"></div>
<div class="l lr " style="right:846px;top:206px">Datum dodání</div>
<div class="f p r" style="left:317px;top:205px;width:86px;height:19px;">18.12.2017</div>
<div class="l lr " style="right:684px;top:206px">Platnost</div>
<div class="f p" style="left:479px;top:205px;width:87px;height:19px;">31.12.2018</div>
<div class="l lr " style="right:1026px;top:227px">Doprava</div>
<div class="f " style="left:137px;top:226px;width:80px;height:19px;"></div>
<div class="l lr " style="right:846px;top:227px">Místo dodání</div>
<div class="f " style="left:317px;top:226px;width:86px;height:19px;"></div>
<div class="l lr " style="right:684px;top:227px">Podmínky</div>
<div class="f " style="left:479px;top:226px;width:87px;height:19px;"></div>
<div class="l lr " style="right:1026px;top:248px">Úhrada</div>
<div class="f " style="left:137px;top:247px;width:80px;height:19px;">Příkazem</div>
<div class="l lr " style="right:846px;top:248px">Bankovní účet</div>
<div class="f " style="left:317px;top:247px;width:86px;height:19px;">číslo-2427/0100</div>
<div class="l lr " style="right:684px;top:248px">Platba</div>
<div class="f " style="left:479px;top:247px;width:87px;height:19px;"></div>
<div class="fr" style="left:74px;top:277px;width:497px;height:56px"></div>
<div class="l" style="left:187px;top:271px;background:#d8d8d8;padding:0 4px">Konečný příjemce</div>
<div class="l lr " style="right:1026px;top:289px">Vyřizuje</div>
<div class="f " style="left:137px;top:287px;width:162px;height:19px;"></div>
<div class="f " style="left:301px;top:287px;width:265px;height:19px;"></div>
<div class="l lr " style="right:1026px;top:310px">Kde</div>
<div class="f " style="left:137px;top:307px;width:429px;height:19px;"></div>
<div class="fr" style="left:579px;top:197px;width:330px;height:135px"></div>
<div class="l" style="left:589px;top:191px;background:#d8d8d8;padding:0 4px">Komu</div>
<div class="abs" style="left:726px;top:190px;width:41px;height:15px;background:#d8d8d8"></div>
<svg class="abs" style="left:726.5px;top:190.5px" width="13" height="13" viewBox="0 0 13 13"><circle cx="6.500" cy="6.500" r="4.800" fill="#ffffff" stroke="#fff" stroke-width="1.300"/><path d="M2.900 10.100 A5 5 0 0 1 10.100 2.900" fill="none" stroke="#3a4862" stroke-width="1.200"/><circle cx="6.5" cy="6.5" r="3.100" fill="#26324a"/></svg>
<div class="abs" style="left:741px;top:192px;font-size:11px;line-height:14px;white-space:nowrap"><span style="letter-spacing:-0.55px">Firma</span></div>
<div class="abs" style="left:780px;top:190px;width:48px;height:15px;background:#d8d8d8"></div>
<svg class="abs" style="left:780.5px;top:190.5px" width="13" height="13" viewBox="0 0 13 13"><circle cx="6.500" cy="6.500" r="4.800" fill="#ffffff" stroke="#fff" stroke-width="1.300"/><path d="M2.900 10.100 A5 5 0 0 1 10.100 2.900" fill="none" stroke="#3a4862" stroke-width="1.200"/></svg>
<div class="abs" style="left:795px;top:192px;font-size:11px;line-height:14px;white-space:nowrap">Osoba</div>
<div class="abs" style="left:834px;top:190px;width:50px;height:15px;background:#d8d8d8"></div>
<svg class="abs" style="left:834.5px;top:190.5px" width="13" height="13" viewBox="0 0 13 13"><circle cx="6.500" cy="6.500" r="4.800" fill="#ffffff" stroke="#fff" stroke-width="1.300"/><path d="M2.900 10.100 A5 5 0 0 1 10.100 2.900" fill="none" stroke="#3a4862" stroke-width="1.200"/></svg>
<div class="abs" style="left:849px;top:192px;font-size:11px;line-height:14px;white-space:nowrap">Externi</div>
<div class="l " style="left:593px;top:217px">IČO</div>
<div class="f " style="left:616px;top:214px;width:80px;height:19px;"><span style="letter-spacing:-0.4px">IČO 1</span></div>
<div class="l " style="left:753px;top:217px">DIČ</div>
<div class="f " style="left:776px;top:214px;width:124px;height:19px;"><span style="letter-spacing:-0.6px">DIČ 1</span></div>
<div class="f p" style="left:588px;top:235px;width:312px;height:19px;">int. název 1</div>
<div class="f g" style="left:588px;top:256px;width:311px;height:51px;line-height:15px;padding-top:2px;">název 1<br>J. Potůčka 22<br>530 09&nbsp; <span style="letter-spacing:-0.75px">PARDUBICE</span></div>
<div class="abs" style="left:884px;top:261px;width:13px;height:42px;background:#8c9cb8;border-left:1px solid #f6f6f6"></div>
<div class="abs" style="left:884px;top:273px;width:13px;height:11px;background:#dedede;border:1px solid;border-color:#fff #9aa7bd #9aa7bd #fff"></div>
<svg class="abs" style="left:886px;top:275px" width="8" height="8"><g fill="#fafafa"><rect x="5" y="1" width="1.500" height="1.500"/><rect x="3" y="3.500" width="1.500" height="1.500"/><rect x="1" y="5.500" width="1.500" height="1.500"/></g></svg>
<svg class="abs" style="left:883px;top:259px" width="15" height="14" viewBox="0 0 15 14"><path d="M0.5 13.5 V7.5 A7.0 7.0 0 0 1 14.5 7.5 V13.5 Z" fill="#d2d2d2" stroke="#7f93b4" stroke-width="1"/><path d="M0.5 13H14.5" stroke="#5f7496" stroke-width="1.200"/><path d="M4.0 9.5 L7.5 5.5 L11.0 9.5 Z" fill="#5a7094"/></svg>
<svg class="abs" style="left:883px;top:291px" width="15" height="14" viewBox="0 0 15 14"><path d="M0.5 0.5 V6.5 A7.0 7.0 0 0 0 14.5 6.5 V0.5 Z" fill="#d2d2d2" stroke="#7f93b4" stroke-width="1"/><path d="M0.5 1H14.5" stroke="#fdfdfd" stroke-width="1"/><path d="M4.0 4.5 L7.5 8.5 L11.0 4.5 Z" fill="#5a7094"/></svg>
<div class="f " style="left:588px;top:309px;width:312px;height:19px;"></div>
<div class="l lr " style="right:1026px;top:339px">Zpráva</div>
<div class="f " style="left:137px;top:338px;width:762px;height:19px;"></div>
<div class="l lr " style="right:1026px;top:367px">Měna</div>
<div class="f p" style="left:137px;top:364px;width:38px;height:19px;">CZK</div>
<div class="f p" style="left:178px;top:364px;width:122px;height:19px;">Koruna česká</div>
<div class="abs" style="left:55px;top:410px;width:847px;height:2px;background:#d1d1d1"></div>
<div class="abs" style="left:131px;top:409px;width:771px;height:1px;background:#fbfbfb"></div>
<div class="abs" style="left:54px;top:395px;width:1px;height:255px;background:#f2f2f2"></div>
<div class="abs" style="left:55px;top:644px;width:848px;height:7px;border-right:1px solid #8a9ab5;border-bottom:1px solid #7689a8;border-radius:0 0 6px 0;box-shadow:inset 0 -1px 0 #e6e6e6"></div>
<div class="abs" style="left:54px;top:387px;width:76px;height:24px;background:#d1d1d1;border:1px solid #fbfbfb;border-right:1px solid #7f8ea8;border-bottom:none;border-radius:7px 7px 0 0;font-size:12px;line-height:25px;text-align:center;padding-right:2px;box-shadow:1px 0 0 #eee">Řádky</div>
<div class="abs" style="left:133px;top:388px;width:74px;height:21px;background:#8d9bb4;border-radius:5px 5px 0 0;font-size:12px;line-height:23px;text-align:center;letter-spacing:0.25px;padding-left:2px">Dokumenty</div>
<div class="l " style="left:82px;top:418px">Typ</div>
<div class="l " style="left:114px;top:418px">Ř</div>
<div class="l " style="left:127px;top:418px">Text</div>
<div class="l lr " style="right:619px;top:418px">Počet</div>
<div class="l " style="left:551px;top:418px">MJ</div>
<div class="l lr " style="right:511px;top:418px">Cena/MJ</div>
<div class="l lr " style="right:430px;top:418px">Cena vč. DPH</div>
<div class="l " style="left:738px;top:418px">Klasifikace</div>
<div class="f s" style="left:82px;top:436px;width:26px;height:19px;"></div>
<div class="f s r" style="left:110px;top:436px;width:17px;height:19px;">1</div>
<div class="f s" style="left:128px;top:436px;width:353px;height:19px;border:1px solid #f01414;border-radius:0;padding:1px 2px 0 2px;">Tiskárna čárových kódů</div>
<div class="f s" style="left:495px;top:436px;width:45px;height:19px;"></div>
<div class="f s" style="left:540px;top:436px;width:27px;height:19px;"></div>
<div class="f s" style="left:568px;top:436px;width:81px;height:19px;"></div>
<div class="f s r" style="left:649px;top:436px;width:80px;height:19px;">85 000.00</div>
<div class="f s" style="left:729px;top:436px;width:26px;height:19px;"></div>
<div class="f s" style="left:756px;top:436px;width:35px;height:19px;"></div>
<div class="f s" style="left:792px;top:436px;width:120px;height:19px;"></div>
<div class="f " style="left:82px;top:455px;width:26px;height:19px;"></div>
<div class="f g" style="left:110px;top:455px;width:17px;height:19px;"></div>
<div class="f " style="left:128px;top:455px;width:367px;height:19px;"></div>
<div class="f " style="left:495px;top:455px;width:45px;height:19px;"></div>
<div class="f " style="left:540px;top:455px;width:27px;height:19px;"></div>
<div class="f " style="left:568px;top:455px;width:81px;height:19px;"></div>
<div class="f " style="left:649px;top:455px;width:80px;height:19px;"></div>
<div class="f " style="left:729px;top:455px;width:26px;height:19px;"></div>
<div class="f " style="left:756px;top:455px;width:35px;height:19px;"></div>
<div class="f " style="left:792px;top:455px;width:120px;height:19px;"></div>
<div class="f " style="left:82px;top:474px;width:26px;height:19px;"></div>
<div class="f g" style="left:110px;top:474px;width:17px;height:19px;"></div>
<div class="f " style="left:128px;top:474px;width:367px;height:19px;"></div>
<div class="f " style="left:495px;top:474px;width:45px;height:19px;"></div>
<div class="f " style="left:540px;top:474px;width:27px;height:19px;"></div>
<div class="f " style="left:568px;top:474px;width:81px;height:19px;"></div>
<div class="f " style="left:649px;top:474px;width:80px;height:19px;"></div>
<div class="f " style="left:729px;top:474px;width:26px;height:19px;"></div>
<div class="f " style="left:756px;top:474px;width:35px;height:19px;"></div>
<div class="f " style="left:792px;top:474px;width:120px;height:19px;"></div>
<div class="f " style="left:82px;top:493px;width:26px;height:19px;"></div>
<div class="f g" style="left:110px;top:493px;width:17px;height:19px;"></div>
<div class="f " style="left:128px;top:493px;width:367px;height:19px;"></div>
<div class="f " style="left:495px;top:493px;width:45px;height:19px;"></div>
<div class="f " style="left:540px;top:493px;width:27px;height:19px;"></div>
<div class="f " style="left:568px;top:493px;width:81px;height:19px;"></div>
<div class="f " style="left:649px;top:493px;width:80px;height:19px;"></div>
<div class="f " style="left:729px;top:493px;width:26px;height:19px;"></div>
<div class="f " style="left:756px;top:493px;width:35px;height:19px;"></div>
<div class="f " style="left:792px;top:493px;width:120px;height:19px;"></div>
<div class="f " style="left:82px;top:512px;width:26px;height:19px;"></div>
<div class="f g" style="left:110px;top:512px;width:17px;height:19px;"></div>
<div class="f " style="left:128px;top:512px;width:367px;height:19px;"></div>
<div class="f " style="left:495px;top:512px;width:45px;height:19px;"></div>
<div class="f " style="left:540px;top:512px;width:27px;height:19px;"></div>
<div class="f " style="left:568px;top:512px;width:81px;height:19px;"></div>
<div class="f " style="left:649px;top:512px;width:80px;height:19px;"></div>
<div class="f " style="left:729px;top:512px;width:26px;height:19px;"></div>
<div class="f " style="left:756px;top:512px;width:35px;height:19px;"></div>
<div class="f " style="left:792px;top:512px;width:120px;height:19px;"></div>
<div class="f " style="left:82px;top:531px;width:26px;height:19px;"></div>
<div class="f g" style="left:110px;top:531px;width:17px;height:19px;"></div>
<div class="f " style="left:128px;top:531px;width:367px;height:19px;"></div>
<div class="f " style="left:495px;top:531px;width:45px;height:19px;"></div>
<div class="f " style="left:540px;top:531px;width:27px;height:19px;"></div>
<div class="f " style="left:568px;top:531px;width:81px;height:19px;"></div>
<div class="f " style="left:649px;top:531px;width:80px;height:19px;"></div>
<div class="f " style="left:729px;top:531px;width:26px;height:19px;"></div>
<div class="f " style="left:756px;top:531px;width:35px;height:19px;"></div>
<div class="f " style="left:792px;top:531px;width:120px;height:19px;"></div>
<div class="f " style="left:82px;top:550px;width:26px;height:19px;"></div>
<div class="f g" style="left:110px;top:550px;width:17px;height:19px;"></div>
<div class="f " style="left:128px;top:550px;width:367px;height:19px;"></div>
<div class="f " style="left:495px;top:550px;width:45px;height:19px;"></div>
<div class="f " style="left:540px;top:550px;width:27px;height:19px;"></div>
<div class="f " style="left:568px;top:550px;width:81px;height:19px;"></div>
<div class="f " style="left:649px;top:550px;width:80px;height:19px;"></div>
<div class="f " style="left:729px;top:550px;width:26px;height:19px;"></div>
<div class="f " style="left:756px;top:550px;width:35px;height:19px;"></div>
<div class="f " style="left:792px;top:550px;width:120px;height:19px;"></div>
<div class="f " style="left:82px;top:569px;width:26px;height:19px;"></div>
<div class="f g" style="left:110px;top:569px;width:17px;height:19px;"></div>
<div class="f " style="left:128px;top:569px;width:367px;height:19px;"></div>
<div class="f " style="left:495px;top:569px;width:45px;height:19px;"></div>
<div class="f " style="left:540px;top:569px;width:27px;height:19px;"></div>
<div class="f " style="left:568px;top:569px;width:81px;height:19px;"></div>
<div class="f " style="left:649px;top:569px;width:80px;height:19px;"></div>
<div class="f " style="left:729px;top:569px;width:26px;height:19px;"></div>
<div class="f " style="left:756px;top:569px;width:35px;height:19px;"></div>
<div class="f " style="left:792px;top:569px;width:120px;height:19px;"></div>
<div class="abs" style="left:480px;top:437px;width:14px;height:18px;background:#d0d0d0;border:1px solid;border-color:#5f7496 #f0f0f0 #f0f0f0 #5f7496;border-top-width:2px"></div>
<div class="abs" style="left:482px;top:435px;width:12px;font-weight:bold;font-size:13px;line-height:14px;letter-spacing:-0.6px;color:#1a0000">...</div>
<div class="abs" style="left:62px;top:438px;width:13px;height:148px;background:#cccccc;border-left:1px solid #f6f6f6"></div>
<svg class="abs" style="left:61px;top:436px" width="15" height="15" viewBox="0 0 15 15"><path d="M0.5 14.5 V7.5 A7.0 7.0 0 0 1 14.5 7.5 V14.5 Z" fill="#d2d2d2" stroke="#7f93b4" stroke-width="1"/><path d="M0.5 14H14.5" stroke="#5f7496" stroke-width="1.200"/><path d="M4.0 10.0 L7.5 6.0 L11.0 10.0 Z" fill="#5a7094"/></svg>
<svg class="abs" style="left:61px;top:573px" width="15" height="15" viewBox="0 0 15 15"><path d="M0.5 0.5 V7.5 A7.0 7.0 0 0 0 14.5 7.5 V0.5 Z" fill="#d2d2d2" stroke="#7f93b4" stroke-width="1"/><path d="M0.5 1H14.5" stroke="#fdfdfd" stroke-width="1"/><path d="M4.0 5.0 L7.5 9.0 L11.0 5.0 Z" fill="#5a7094"/></svg>
<svg class="abs" style="left:63px;top:492px" width="10" height="32" viewBox="0 0 10 32"><g fill="#f4f4f4"><rect x="2" y="2" width="2" height="2"/><rect x="6" y="6" width="2" height="2"/><rect x="2" y="10" width="2" height="2"/><rect x="6" y="14" width="2" height="2"/><rect x="2" y="18" width="2" height="2"/><rect x="6" y="22" width="2" height="2"/><rect x="2" y="26" width="2" height="2"/><rect x="6" y="30" width="2" height="2"/></g></svg>
<div class="fr" style="left:921px;top:147px;width:220px;height:141px"></div>
<div class="b " style="left:981px;top:134px;width:92px;height:19px">Kontroly</div>
<div class="abs" style="left:941px;top:158px;width:187px;height:121px;background:#eaeaea"></div>
<div class="abs" style="left:925px;top:159px;width:13px;height:13px;background:#fff;border:1px solid #c4dcf8;box-shadow:inset 1px 1px 0 #4a5c80, inset -1px -1px 0 #8fa0bd"></div>
<div class="abs" style="left:926px;top:175px;width:12px;height:12px;background:#d6d6d6;border:solid;border-width:2px 1px 1px 2px;border-color:#657a9c #fafafa #fafafa #657a9c"></div>
<div class="abs" style="left:926px;top:190px;width:12px;height:12px;background:#d6d6d6;border:solid;border-width:2px 1px 1px 2px;border-color:#657a9c #fafafa #fafafa #657a9c"></div>
<div class="abs" style="left:926px;top:205px;width:12px;height:12px;background:#d6d6d6;border:solid;border-width:2px 1px 1px 2px;border-color:#657a9c #fafafa #fafafa #657a9c"></div>
<div class="abs" style="left:926px;top:220px;width:12px;height:12px;background:#d6d6d6;border:solid;border-width:2px 1px 1px 2px;border-color:#657a9c #fafafa #fafafa #657a9c"></div>
<div class="abs" style="left:926px;top:235px;width:12px;height:12px;background:#d6d6d6;border:solid;border-width:2px 1px 1px 2px;border-color:#657a9c #fafafa #fafafa #657a9c"></div>
<div class="abs" style="left:926px;top:250px;width:12px;height:12px;background:#d6d6d6;border:solid;border-width:2px 1px 1px 2px;border-color:#657a9c #fafafa #fafafa #657a9c"></div>
<div class="abs" style="left:926px;top:265px;width:12px;height:12px;background:#d6d6d6;border:solid;border-width:2px 1px 1px 2px;border-color:#657a9c #fafafa #fafafa #657a9c"></div>
<div class="abs" style="left:942px;top:159px;font-size:11px;line-height:14px;white-space:nowrap;letter-spacing:-0.05px">Překročen fin.limit pro zveřejnění</div>
<div class="abs" style="left:1129px;top:161px;width:12px;height:116px;background:#cccccc;border-left:1px solid #f6f6f6"></div>
<svg class="abs" style="left:1128px;top:159px" width="14" height="15" viewBox="0 0 14 15"><path d="M0.5 14.5 V7.0 A6.5 6.5 0 0 1 13.5 7.0 V14.5 Z" fill="#d2d2d2" stroke="#7f93b4" stroke-width="1"/><path d="M0.5 14H13.5" stroke="#5f7496" stroke-width="1.200"/><path d="M3.5 10.0 L7.0 6.0 L10.5 10.0 Z" fill="#5a7094"/></svg>
<svg class="abs" style="left:1128px;top:264px" width="14" height="15" viewBox="0 0 14 15"><path d="M0.5 0.5 V8.0 A6.5 6.5 0 0 0 13.5 8.0 V0.5 Z" fill="#d2d2d2" stroke="#7f93b4" stroke-width="1"/><path d="M0.5 1H13.5" stroke="#fdfdfd" stroke-width="1"/><path d="M3.5 5.0 L7.0 9.0 L10.5 5.0 Z" fill="#5a7094"/></svg>
<svg class="abs" style="left:1130px;top:203px" width="10" height="32" viewBox="0 0 10 32"><g fill="#f4f4f4"><rect x="2" y="2" width="2" height="2"/><rect x="6" y="6" width="2" height="2"/><rect x="2" y="10" width="2" height="2"/><rect x="6" y="14" width="2" height="2"/><rect x="2" y="18" width="2" height="2"/><rect x="6" y="22" width="2" height="2"/><rect x="2" y="26" width="2" height="2"/><rect x="6" y="30" width="2" height="2"/></g></svg>
<div class="l " style="left:931px;top:301px">Zveřejnit v ISRS</div>
<div class="f p" style="left:1053px;top:298px;width:37px;height:19px;">Určit</div>
<div class="fr" style="left:921px;top:335px;width:220px;height:316px"></div>
<div class="b dis" style="left:935px;top:326px;width:74px;height:19px"><span style="letter-spacing:-0.3px">Data pro RS</span></div>
<div class="l " style="left:935px;top:353px">NS</div>
<div class="f g d" style="left:953px;top:350px;width:48px;height:19px;"></div>
<div class="l " style="left:1014px;top:353px">Osoba</div>
<div class="f g d" style="left:1053px;top:350px;width:79px;height:19px;"></div>
<div class="l " style="left:935px;top:379px">Cena</div>
<div class="f g d" style="left:968px;top:376px;width:54px;height:19px;"></div>
<div class="f g d" style="left:1022px;top:376px;width:80px;height:19px;"></div>
<div class="f g d" style="left:1102px;top:376px;width:30px;height:19px;"></div>
<div class="l " style="left:932px;top:408px">Datum potvrzení</div>
<div class="f g d" style="left:1053px;top:405px;width:79px;height:19px;"></div>
<div class="l " style="left:931px;top:430px">Předmět</div>
<div class="f g d" style="left:928px;top:448px;width:204px;height:142px;"></div>
<div class="l lr " style="right:152px;top:603px">Číslo smlouvy</div>
<div class="f g d" style="left:1011px;top:600px;width:121px;height:19px;"></div>
<div class="l lr " style="right:152px;top:630px">Stav zveř.</div>
<div class="f g d" style="left:1011px;top:627px;width:121px;height:19px;"></div>
<div class="l lr " style="right:1054px;top:602px">Datum</div>
<div class="f p" style="left:110px;top:599px;width:71px;height:19px;">04.12.2017</div>
<div class="l lr " style="right:1054px;top:624px">Vystavil</div>
<div class="f " style="left:110px;top:621px;width:134px;height:19px;">Malkus Tomáš</div>
<svg class="abs" style="left:258px;top:624px" width="12" height="12" viewBox="0 0 12 12"><rect x="0" y="0" width="12" height="12" fill="#fafafa"/><path d="M0 12V0H12" fill="none" stroke="#5f7496" stroke-width="3"/><rect x="1.500" y="1.500" width="9.500" height="9.500" fill="#fff"/><path d="M3 5.500 L5.300 8.300 L9.800 3" fill="none" stroke="#000" stroke-width="1.900"/></svg>
<div class="f " style="left:275px;top:621px;width:210px;height:19px;"><span style="letter-spacing:-0.22px">E-mail: dmatoska@bbm.cz</span></div>
<div class="l lr " style="right:639px;top:602px">Cena</div>
<div class="f " style="left:524px;top:599px;width:54px;height:19px;"><span style="letter-spacing:-0.45px">vč. DPH</span></div>
<div class="f g r" style="left:579px;top:599px;width:80px;height:19px;">85 000.00</div>
<div class="l " style="left:663px;top:604px">CZK</div>
<div class="l " style="left:491px;top:624px">Cena pro tisk</div>
<div class="f g r" style="left:579px;top:621px;width:80px;height:19px;">85 000.00</div>
<div class="l " style="left:663px;top:625px">CZK</div>
<div class="b " style="left:835px;top:609px;width:61px;height:19px">Přepočet</div>
<div class="b " style="left:63px;top:660px;width:79px;height:19px">Uzavření</div>
<div class="b " style="left:153px;top:660px;width:79px;height:19px">Schválení</div>
<div class="b " style="left:244px;top:660px;width:79px;height:19px">Nes<u>c</u>hválení</div>
<div class="b " style="left:334px;top:660px;width:79px;height:19px">Potvrzení</div>
<div class="b dis" style="left:487px;top:660px;width:79px;height:19px">S<u>a</u>ldo</div>
<div class="b " style="left:668px;top:660px;width:79px;height:19px">Historie</div>
<div class="b " style="left:805px;top:660px;width:79px;height:19px">Rozpočty</div>
<div class="b dis" style="left:950px;top:660px;width:149px;height:19px"><span style="letter-spacing:-0.15px">Odeslat ke zveřejnění do RS</span></div>
</body></html>
